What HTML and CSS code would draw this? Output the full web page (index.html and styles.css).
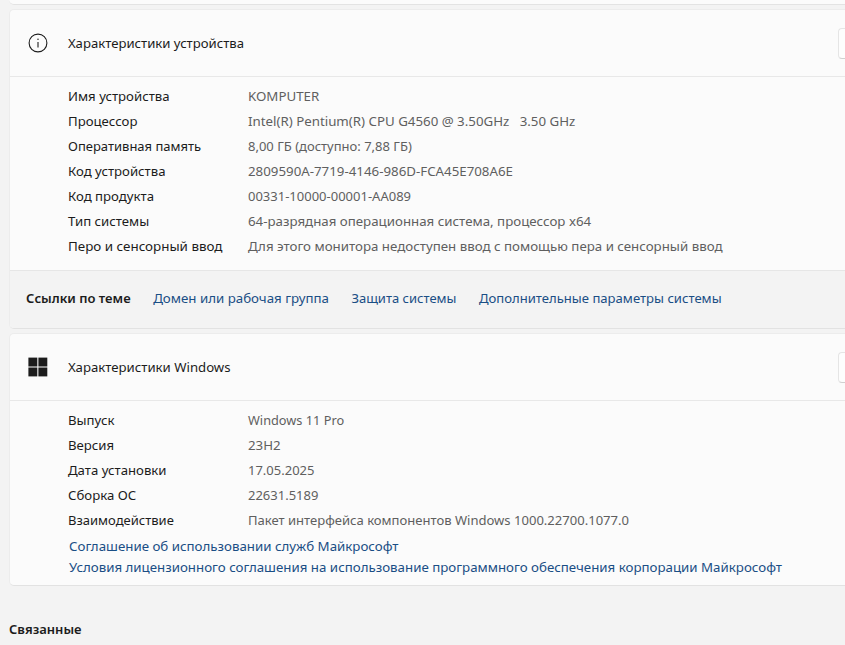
FILE: index.html
```html
<!DOCTYPE html>
<html lang="ru">
<head>
<meta charset="utf-8">
<title>Система — О системе</title>
<link rel="stylesheet" href="styles.css">
</head>
<body>
<div class="page">
  <div class="card-stub"></div>
  <section class="card first">
    <header class="head">
      <svg class="icon" width="20" height="20" viewBox="0 0 20 20" fill="none" stroke="#1f1f1f" stroke-width="1.1"><circle cx="10" cy="10" r="8.9"/><path d="M10 9v5.6"/><circle cx="10" cy="6.3" r=".75" fill="#1f1f1f" stroke="none"/></svg>
      <h2>Характеристики устройства</h2>
      <span class="copy"></span>
    </header>
    <dl class="specs">
      <div class="row"><dt>Имя устройства</dt><dd>KOMPUTER</dd></div>
      <div class="row"><dt>Процессор</dt><dd>Intel(R) Pentium(R) CPU G4560 @ 3.50GHz&nbsp;&nbsp; 3.50 GHz</dd></div>
      <div class="row"><dt class="tight">Оперативная память</dt><dd class="tight">8,00 ГБ (доступно: 7,88 ГБ)</dd></div>
      <div class="row"><dt>Код устройства</dt><dd>2809590A-7719-4146-986D-FCA45E708A6E</dd></div>
      <div class="row"><dt>Код продукта</dt><dd class="tight">00331-10000-00001-AA089</dd></div>
      <div class="row"><dt>Тип системы</dt><dd>64-разрядная операционная система, процессор x64</dd></div>
      <div class="row"><dt class="wide">Перо и сенсорный ввод</dt><dd>Для этого монитора недоступен ввод с помощью пера и сенсорный ввод</dd></div>
    </dl>
    <nav class="related-links">
      <strong>Ссылки по теме</strong>
      <a href="#">Домен или рабочая группа</a>
      <a class="short" href="#">Защита системы</a>
      <a class="long" href="#">Дополнительные параметры системы</a>
    </nav>
  </section>
  <section class="card second">
    <header class="head">
      <svg class="icon" width="20" height="20" viewBox="0 0 20 20" fill="#1c1c1c"><rect x="0.4" y="0.6" width="8.9" height="8.9"/><rect x="10.4" y="0.6" width="8.9" height="8.9"/><rect x="0.4" y="10.5" width="8.9" height="8.9"/><rect x="10.4" y="10.5" width="8.9" height="8.9"/></svg>
      <h2 class="windows">Характеристики Windows</h2>
      <span class="copy"></span>
    </header>
    <dl class="specs">
      <div class="row"><dt>Выпуск</dt><dd class="narrow">Windows 11 Pro</dd></div>
      <div class="row"><dt>Версия</dt><dd>23H2</dd></div>
      <div class="row"><dt>Дата установки</dt><dd class="tight">17.05.2025</dd></div>
      <div class="row"><dt>Сборка ОС</dt><dd class="tight">22631.5189</dd></div>
      <div class="row"><dt class="tight">Взаимодействие</dt><dd class="mid">Пакет интерфейса компонентов Windows 1000.22700.1077.0</dd></div>
    </dl>
    <div class="legal">
      <a href="#">Соглашение об использовании служб Майкрософт</a>
      <a href="#">Условия лицензионного соглашения на использование программного обеспечения корпорации Майкрософт</a>
    </div>
  </section>
  <h3 class="section-title">Связанные</h3>
</div>
</body>
</html>
```
FILE: styles.css
```css
* { box-sizing: border-box; }
html, body { margin: 0; height: 100%; overflow: hidden; }
body {
  background: #f3f3f3;
  color: #1c1c1c;
  font-family: "Noto Sans", "Open Sans", sans-serif;
  font-size: 13.3px;
}
.page { padding-left: 9px; }
.card-stub {
  height: 5px;
  background: #fbfbfb;
  border-bottom: 1px solid #e3e3e3;
  border-bottom-left-radius: 5px;
}
.card {
  background: #fbfbfb;
  border: 1px solid #ececec;
  border-right: 0;
  border-bottom-color: #e2e2e2;
  border-radius: 5px 0 0 5px;
  overflow: hidden;
}
.first { margin-top: 4px; height: 320px; }
.second { margin-top: 4px; height: 253px; }
.head {
  height: 67px;
  display: flex;
  align-items: center;
  padding-left: 18px;
  border-bottom: 1px solid #e8e8e8;
}
.icon { flex: none; }
.head h2 { margin: 0 0 0 20px; font-size: 13.15px; font-weight: 400; flex: 1; }
.head .windows { font-size: 13.2px; }
.copy {
  width: 7px;
  height: 31px;
  background: #fdfdfd;
  border: 1px solid #e5e5e5;
  border-right: 0;
  border-bottom-color: #d0d0d0;
  border-radius: 4px 0 0 4px;
}
.specs { margin: 6px 0 0; padding-left: 58px; }
.row { display: flex; height: 25px; align-items: center; }
.row dt { width: 180px; font-size: 13.2px; }
.row dd { margin: 0; color: #5f5f5f; }
.row .tight { font-size: 13px; }
.row .mid { font-size: 13.05px; }
.row .narrow { font-size: 12.75px; }
.row .wide { font-size: 13.4px; }
.related-links {
  margin-top: 12px;
  height: 58px;
  background: #f3f3f3;
  border-top: 1px solid #e6e6e6;
  display: flex;
  align-items: center;
  padding: 0 0 3px 16px;
  gap: 22.5px;
}
.related-links strong { font-weight: 600; font-size: 13.05px; }
.related-links .short { font-size: 13px; }
.related-links .long { font-size: 13.1px; }
a { color: #1a4e85; text-decoration: none; }
.legal { display: flex; flex-direction: column; padding: 4px 0 0 59px; }
.legal a { height: 21px; line-height: 21px; }
.section-title { margin: 34px 0 0; font-size: 13px; font-weight: 600; line-height: 18px; }
```
